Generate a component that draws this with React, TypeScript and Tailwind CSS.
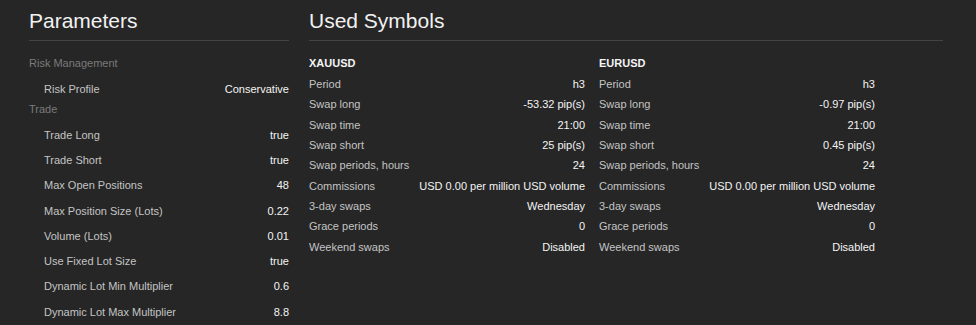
import React from "react";

type Row = [string, string];

const riskRows: Row[] = [["Risk Profile", "Conservative"]];
const tradeRows: Row[] = [
  ["Trade Long", "true"],
  ["Trade Short", "true"],
  ["Max Open Positions", "48"],
  ["Max Position Size (Lots)", "0.22"],
  ["Volume (Lots)", "0.01"],
  ["Use Fixed Lot Size", "true"],
  ["Dynamic Lot Min Multiplier", "0.6"],
  ["Dynamic Lot Max Multiplier", "8.8"],
];

const symbols: { name: string; rows: Row[] }[] = [
  {
    name: "XAUUSD",
    rows: [
      ["Period", "h3"],
      ["Swap long", "-53.32 pip(s)"],
      ["Swap time", "21:00"],
      ["Swap short", "25 pip(s)"],
      ["Swap periods, hours", "24"],
      ["Commissions", "USD 0.00 per million USD volume"],
      ["3-day swaps", "Wednesday"],
      ["Grace periods", "0"],
      ["Weekend swaps", "Disabled"],
    ],
  },
  {
    name: "EURUSD",
    rows: [
      ["Period", "h3"],
      ["Swap long", "-0.97 pip(s)"],
      ["Swap time", "21:00"],
      ["Swap short", "0.45 pip(s)"],
      ["Swap periods, hours", "24"],
      ["Commissions", "USD 0.00 per million USD volume"],
      ["3-day swaps", "Wednesday"],
      ["Grace periods", "0"],
      ["Weekend swaps", "Disabled"],
    ],
  },
];

function GroupHeader({ title }: { title: string }) {
  return (
    <div className="h-[20.7px] pb-[6px] leading-[14.7px] text-[11px] text-[#7a7a7a]">{title}</div>
  );
}

function ParamRow({ row }: { row: Row }) {
  return (
    <div className="flex h-[25.3px] items-center justify-between pl-[15px] text-[11px]">
      <span className="text-[#c4c4c4]">{row[0]}</span>
      <span className="text-[#f4f4f4]">{row[1]}</span>
    </div>
  );
}

export default function App() {
  return (
    <div
      className="flex h-[325px] w-[976px] gap-[20px] overflow-hidden bg-[#262626] pl-[29px] pt-[9px]"
      style={{ fontFamily: '"Liberation Sans", Arial, sans-serif' }}
    >
      <div className="w-[260px] shrink-0">
        <h2 className="border-b border-[#444444] pb-[7px] text-[21px] leading-[24px] text-[#f2f2f2]">
          Parameters
        </h2>
        <div className="mt-[14.6px]">
          <GroupHeader title="Risk Management" />
          {riskRows.map((r) => (
            <ParamRow key={r[0]} row={r} />
          ))}
          <GroupHeader title="Trade" />
          {tradeRows.map((r) => (
            <ParamRow key={r[0]} row={r} />
          ))}
        </div>
      </div>
      <div className="w-[634px] shrink-0">
        <h2 className="border-b border-[#444444] pb-[7px] text-[21px] leading-[24px] text-[#f2f2f2]">
          Used Symbols
        </h2>
        <div className="mt-[11.8px] flex gap-[14px]">
          {symbols.map((s) => (
            <div key={s.name} className="w-[276px] text-[11px]">
              <div className="flex h-[21px] items-center font-bold text-[#f4f4f4]">{s.name}</div>
              {s.rows.map((r) => (
                <div key={r[0]} className="flex h-[20.4px] items-center justify-between">
                  <span className="text-[#c4c4c4]">{r[0]}</span>
                  <span className="text-[#f4f4f4]">{r[1]}</span>
                </div>
              ))}
            </div>
          ))}
        </div>
      </div>
    </div>
  );
}
